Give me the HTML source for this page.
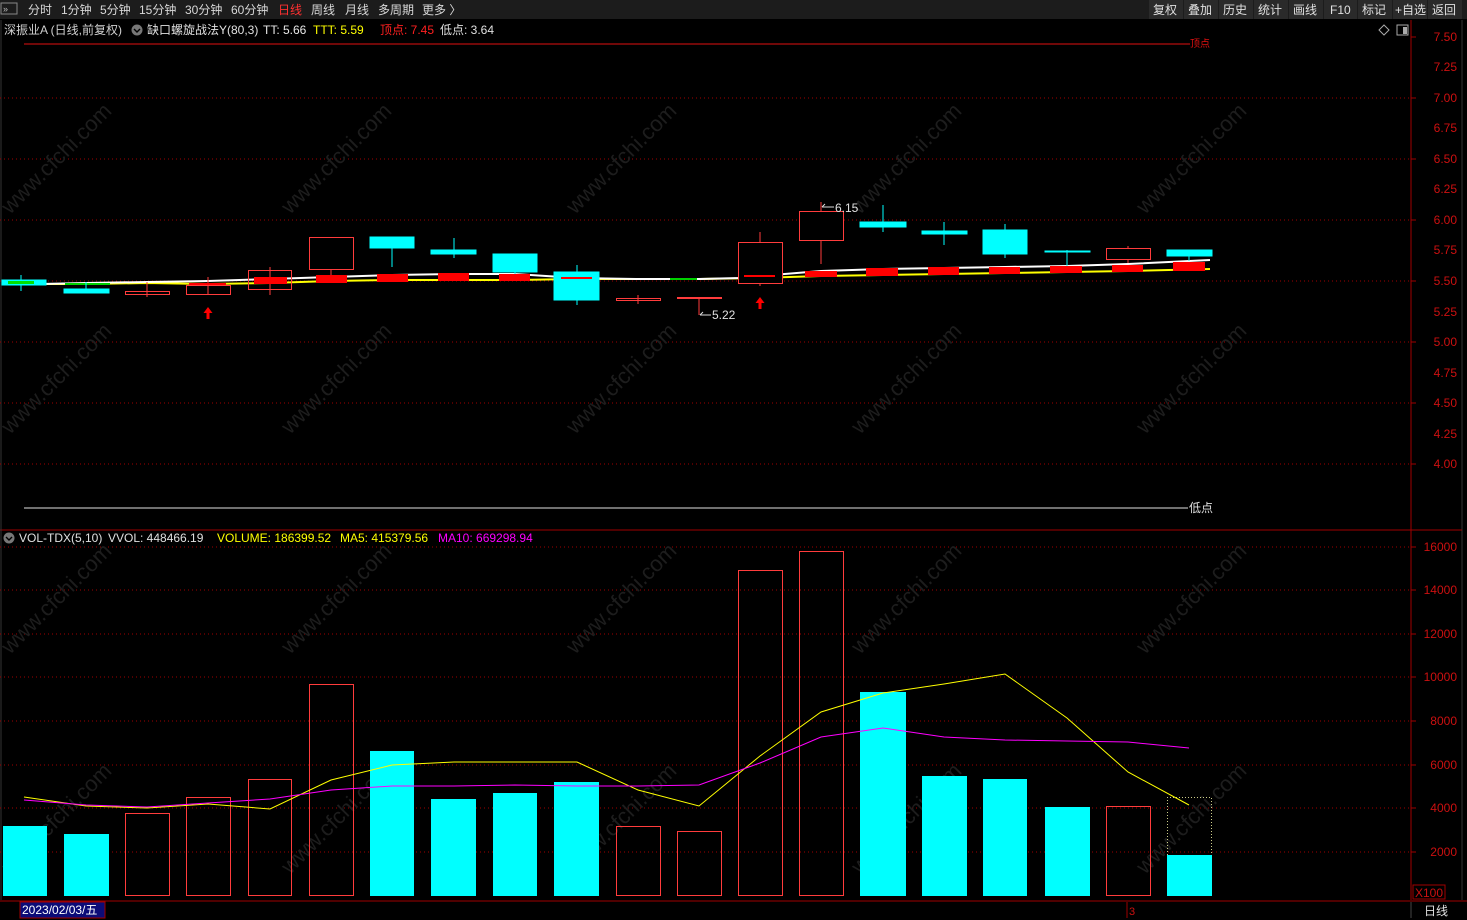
<!DOCTYPE html>
<html><head><meta charset="utf-8"><style>
html,body{margin:0;padding:0;background:#000;width:1467px;height:920px;overflow:hidden}
svg{display:block}
text{font-family:"Liberation Sans","Noto Sans CJK SC",sans-serif}
</style></head><body>
<svg width="1467" height="920" xmlns="http://www.w3.org/2000/svg">
<rect width="1467" height="920" fill="#000"/>
<!-- top bar -->
<rect x="0" y="0" width="1467" height="19" fill="#1c1c1c"/>
<rect x="1" y="3" width="16" height="11" fill="none" stroke="#888" stroke-width="1"/>
<text x="3" y="12" font-size="9" fill="#bbb">»</text>
<g font-size="12" fill="#d8d8d8">
<text x="28" y="14">分时</text><text x="61" y="14">1分钟</text><text x="100" y="14">5分钟</text><text x="139" y="14">15分钟</text><text x="185" y="14">30分钟</text><text x="231" y="14">60分钟</text>
<text x="278" y="14" fill="#ff3030">日线</text><text x="311" y="14">周线</text><text x="345" y="14">月线</text><text x="378" y="14">多周期</text><text x="422" y="14">更多 〉</text>
</g>
<g fill="#2a2a2a"><rect x="1149" y="0" width="34" height="19"/><rect x="1184" y="0" width="34" height="19"/><rect x="1219" y="0" width="34" height="19"/><rect x="1254" y="0" width="34" height="19"/><rect x="1289" y="0" width="34" height="19"/><rect x="1324" y="0" width="33" height="19"/><rect x="1358" y="0" width="34" height="19"/><rect x="1393" y="0" width="34" height="19"/><rect x="1428" y="0" width="34" height="19"/></g>
<g font-size="12" fill="#e0e0e0">
<text x="1153" y="14">复权</text><text x="1188" y="14">叠加</text><text x="1223" y="14">历史</text><text x="1258" y="14">统计</text><text x="1293" y="14">画线</text><text x="1330" y="14">F10</text><text x="1362" y="14">标记</text><text x="1395" y="14">+自选</text><text x="1432" y="14">返回</text>
</g>
<!-- header -->
<g font-size="12">
<text x="4" y="34" fill="#d0d0d0">深振业A (日线,前复权)</text>
<circle cx="137" cy="30" r="5.5" fill="#777"/><path d="M134 29l3 3 3-3" stroke="#000" stroke-width="1.4" fill="none"/>
<text x="147" y="34" fill="#e0e0e0">缺口螺旋战法Y(80,3)</text>
<text x="263" y="34" fill="#e8e8e8">TT: 5.66</text>
<text x="313" y="34" fill="#ffff00">TTT: 5.59</text>
<text x="380" y="34" fill="#ff2020">顶点: 7.45</text>
<text x="440" y="34" fill="#e0e0e0">低点: 3.64</text>
</g>
<path d="M1384 25l5 5-5 5-5-5z" fill="none" stroke="#aaa"/>
<rect x="1397" y="25" width="11" height="10" fill="none" stroke="#aaa"/><rect x="1403" y="27" width="4" height="7" fill="#aaa"/>
<!-- frames -->
<line x1="1411" y1="20" x2="1411" y2="900" stroke="#a00000"/>
<line x1="1462" y1="20" x2="1462" y2="900" stroke="#333"/>
<line x1="0" y1="530" x2="1462" y2="530" stroke="#a00000"/>
<line x1="0" y1="901" x2="1467" y2="901" stroke="#a00000"/>
<line x1="1" y1="20" x2="1" y2="900" stroke="#333"/>
<!-- price grid -->
<g stroke="#a00000" stroke-dasharray="1 3">
<line x1="0" y1="98" x2="1410" y2="98"/><line x1="0" y1="159" x2="1410" y2="159"/><line x1="0" y1="220" x2="1410" y2="220"/><line x1="0" y1="281" x2="1410" y2="281"/><line x1="0" y1="342" x2="1410" y2="342"/><line x1="0" y1="403" x2="1410" y2="403"/><line x1="0" y1="464" x2="1410" y2="464"/>
<line x1="0" y1="547" x2="1410" y2="547"/><line x1="0" y1="590" x2="1410" y2="590"/><line x1="0" y1="634" x2="1410" y2="634"/><line x1="0" y1="677" x2="1410" y2="677"/><line x1="0" y1="721" x2="1410" y2="721"/><line x1="0" y1="765" x2="1410" y2="765"/><line x1="0" y1="808" x2="1410" y2="808"/><line x1="0" y1="852" x2="1410" y2="852"/>
</g>
<g font-size="12" fill="#cc1010" text-anchor="end">
<text x="1457" y="41">7.50</text><text x="1457" y="71">7.25</text><text x="1457" y="102">7.00</text><text x="1457" y="132">6.75</text><text x="1457" y="163">6.50</text><text x="1457" y="193">6.25</text><text x="1457" y="224">6.00</text><text x="1457" y="254">5.75</text><text x="1457" y="285">5.50</text><text x="1457" y="316">5.25</text><text x="1457" y="346">5.00</text><text x="1457" y="377">4.75</text><text x="1457" y="407">4.50</text><text x="1457" y="438">4.25</text><text x="1457" y="468">4.00</text>
<text x="1457" y="551">16000</text><text x="1457" y="594">14000</text><text x="1457" y="638">12000</text><text x="1457" y="681">10000</text><text x="1457" y="725">8000</text><text x="1457" y="769">6000</text><text x="1457" y="812">4000</text><text x="1457" y="856">2000</text>
</g>
<g stroke="#a00000"><path d="M1411 37h5M1411 98h5M1411 159h5M1411 220h5M1411 281h5M1411 342h5M1411 403h5M1411 464h5M1411 547h5M1411 590h5M1411 634h5M1411 677h5M1411 721h5M1411 765h5M1411 808h5M1411 852h5"/></g>
<rect x="1413" y="885" width="32" height="14" fill="none" stroke="#a00000"/>
<text x="1415" y="897" font-size="12" fill="#cc1010">X100</text>
<!-- watermarks -->
<g font-size="22" fill="#1d1d1d">
<text transform="translate(10,215) rotate(-45)">www.cfchi.com</text><text transform="translate(290,215) rotate(-45)">www.cfchi.com</text><text transform="translate(575,215) rotate(-45)">www.cfchi.com</text><text transform="translate(860,215) rotate(-45)">www.cfchi.com</text><text transform="translate(1145,215) rotate(-45)">www.cfchi.com</text>
<text transform="translate(10,435) rotate(-45)">www.cfchi.com</text><text transform="translate(290,435) rotate(-45)">www.cfchi.com</text><text transform="translate(575,435) rotate(-45)">www.cfchi.com</text><text transform="translate(860,435) rotate(-45)">www.cfchi.com</text><text transform="translate(1145,435) rotate(-45)">www.cfchi.com</text>
<text transform="translate(10,655) rotate(-45)">www.cfchi.com</text><text transform="translate(290,655) rotate(-45)">www.cfchi.com</text><text transform="translate(575,655) rotate(-45)">www.cfchi.com</text><text transform="translate(860,655) rotate(-45)">www.cfchi.com</text><text transform="translate(1145,655) rotate(-45)">www.cfchi.com</text>
<text transform="translate(10,875) rotate(-45)">www.cfchi.com</text><text transform="translate(290,875) rotate(-45)">www.cfchi.com</text><text transform="translate(575,875) rotate(-45)">www.cfchi.com</text><text transform="translate(860,875) rotate(-45)">www.cfchi.com</text><text transform="translate(1145,875) rotate(-45)">www.cfchi.com</text>
</g>
<!-- top/bottom lines -->
<line x1="24" y1="44" x2="1190" y2="44" stroke="#e01010"/>
<text x="1190" y="47" font-size="10" fill="#e01010">顶点</text>
<line x1="24" y1="508" x2="1188" y2="508" stroke="#e0e0e0"/>
<text x="1189" y="512" font-size="12" fill="#e0e0e0">低点</text>
<!-- MA lines -->
<polyline fill="none" stroke="#ffff00" stroke-width="2" points="2,284 86,284 147,283 208,284 270,283 331,281 392,280 454,280 515,280 577,279 638,279 699,279 760,278 821,276 883,275 944,274 1005,273 1067,272 1128,271 1210,269"/>
<polyline fill="none" stroke="#ffffff" stroke-width="2" points="2,283 40,284 86,283 147,282 208,281 270,279 331,277 392,275 454,274 515,274 577,278 638,279 699,279 740,278 760,276 821,271 883,269 944,268 1005,267 1067,266 1128,264 1210,260"/>
<line x1="65" y1="284" x2="110" y2="284" stroke="#00d000" stroke-width="2"/>
<line x1="670" y1="279" x2="697" y2="279" stroke="#00d000" stroke-width="2"/>
<!-- candles -->
<g stroke="#00ffff" fill="#00ffff">
<line x1="21" y1="275" x2="21" y2="291"/><rect x="2" y="280" width="44" height="5"/>
<line x1="86" y1="282" x2="86" y2="293"/><rect x="64" y="289" width="45" height="4"/>
<line x1="392" y1="248" x2="392" y2="267"/><rect x="370" y="237" width="44" height="11"/>
<line x1="454" y1="238" x2="454" y2="258"/><rect x="431" y="250" width="45" height="4"/>
<line x1="515" y1="272" x2="515" y2="274"/><rect x="493" y="254" width="44" height="18"/>
<line x1="577" y1="265" x2="577" y2="305"/><rect x="554" y="272" width="45" height="28"/>
<line x1="883" y1="205" x2="883" y2="232"/><rect x="860" y="222" width="46" height="5"/>
<line x1="944" y1="222" x2="944" y2="245"/><rect x="922" y="231" width="45" height="3"/>
<line x1="1005" y1="224" x2="1005" y2="258"/><rect x="983" y="230" width="44" height="24"/>
<line x1="1067" y1="250" x2="1067" y2="266"/><rect x="1045" y="251" width="45" height="1"/>
<line x1="1189" y1="256" x2="1189" y2="261"/><rect x="1167" y="250" width="45" height="6"/>
</g>
<rect x="8" y="281" width="26" height="3" fill="#00e000"/>
<g stroke="#ff3c3c" fill="none">
<path d="M147 282v15M208 277v18M270 267v28M331 270v5M638 295v9M760 232v54M821 202v62M1128 246v17M699 299v16"/>
<rect x="125.5" y="291.5" width="44" height="3"/>
<rect x="186.5" y="285.5" width="44" height="9"/>
<rect x="248.5" y="270.5" width="43" height="19"/>
<rect x="309.5" y="237.5" width="44" height="32"/>
<rect x="616.5" y="298.5" width="44" height="2"/>
<rect x="738.5" y="242.5" width="44" height="41" fill="#000"/>
<rect x="799.5" y="211.5" width="44" height="29" fill="#000"/>
<rect x="1106.5" y="248.5" width="44" height="11" fill="#000"/>
</g>
<line x1="760" y1="232" x2="760" y2="242" stroke="#ff3c3c"/>
<rect x="677" y="297" width="45" height="2" fill="#ff3c3c"/>
<g fill="#ff0000">
<rect x="189" y="283" width="37" height="2"/><rect x="254" y="277" width="33" height="7"/><rect x="316" y="275" width="31" height="8"/><rect x="377" y="274" width="31" height="8"/><rect x="438" y="273" width="31" height="8"/><rect x="499" y="274" width="31" height="7"/><rect x="561" y="277" width="31" height="2"/><rect x="744" y="275" width="31" height="2"/><rect x="805" y="271" width="32" height="6"/><rect x="866" y="268" width="32" height="8"/><rect x="928" y="267" width="31" height="8"/><rect x="989" y="267" width="31" height="7"/><rect x="1050" y="266" width="32" height="7"/><rect x="1112" y="265" width="31" height="7"/><rect x="1173" y="262" width="32" height="9"/>
<path d="M208 307l-4.5 6h3v6h3v-6h3z"/><path d="M760 297l-4.5 6h3v6h3v-6h3z"/>
</g>
<g font-size="12" fill="#e0e0e0">
<text x="835" y="212">6.15</text><path d="M822 207h12M822 207l3-3" stroke="#ddd" fill="none"/>
<text x="712" y="319">5.22</text><path d="M700 315h11M700 315l3-3" stroke="#ddd" fill="none"/>
</g>
<!-- volume header -->
<circle cx="9" cy="538" r="5.5" fill="#777"/><path d="M6 537l3 3 3-3" stroke="#000" stroke-width="1.4" fill="none"/>
<g font-size="12">
<text x="19" y="542" fill="#e0e0e0">VOL-TDX(5,10)</text>
<text x="108" y="542" fill="#e0e0e0">VVOL: 448466.19</text>
<text x="217" y="542" fill="#ffff00">VOLUME: 186399.52</text>
<text x="340" y="542" fill="#ffff00">MA5: 415379.56</text>
<text x="438" y="542" fill="#ff00ff">MA10: 669298.94</text>
</g>
<!-- volume bars -->
<g fill="#00ffff">
<rect x="3" y="826" width="44" height="70"/><rect x="64" y="834" width="45" height="62"/><rect x="370" y="751" width="44" height="145"/><rect x="431" y="799" width="45" height="97"/><rect x="493" y="793" width="44" height="103"/><rect x="554" y="782" width="45" height="114"/><rect x="860" y="692" width="46" height="204"/><rect x="922" y="776" width="45" height="120"/><rect x="983" y="779" width="44" height="117"/><rect x="1045" y="807" width="45" height="89"/><rect x="1167" y="855" width="45" height="41"/>
</g>
<g fill="none" stroke="#ff3c3c">
<rect x="125.5" y="813.5" width="44" height="82"/><rect x="186.5" y="797.5" width="44" height="98"/><rect x="248.5" y="779.5" width="43" height="116"/><rect x="309.5" y="684.5" width="44" height="211"/><rect x="616.5" y="826.5" width="44" height="69"/><rect x="677.5" y="831.5" width="44" height="64"/><rect x="738.5" y="570.5" width="44" height="325"/><rect x="799.5" y="551.5" width="44" height="344"/><rect x="1106.5" y="806.5" width="44" height="89"/>
</g>
<path d="M1167.5 855V797.5H1211.5V855" fill="none" stroke="#cccc88" stroke-dasharray="1 2"/>
<polyline fill="none" stroke="#ffff00" points="24,797 86,806 147,808 208,804 270,809 331,780 392,765 454,762 515,762 577,762 638,790 699,806 760,756 821,712 883,693 944,684 1005,674 1067,718 1128,772 1189,805"/>
<polyline fill="none" stroke="#ff00ff" points="24,800 86,805 147,807 208,803 270,799 331,790 392,786 454,786 515,785 577,786 638,786 699,785 760,763 821,737 883,728 944,737 1005,740 1067,741 1128,742 1189,748"/>
<!-- bottom bar -->
<rect x="20" y="902" width="85" height="16" fill="#0c0c78" stroke="#a00000"/>
<text x="22" y="914" font-size="12" fill="#ffffff">2023/02/03/五</text>
<line x1="1127" y1="902" x2="1127" y2="918" stroke="#a00000"/>
<text x="1129" y="915" font-size="11" fill="#cc1010">3</text>
<line x1="1411" y1="902" x2="1411" y2="918" stroke="#444"/>
<text x="1424" y="915" font-size="12" fill="#e0e0e0">日线</text>
</svg>
</body></html>
